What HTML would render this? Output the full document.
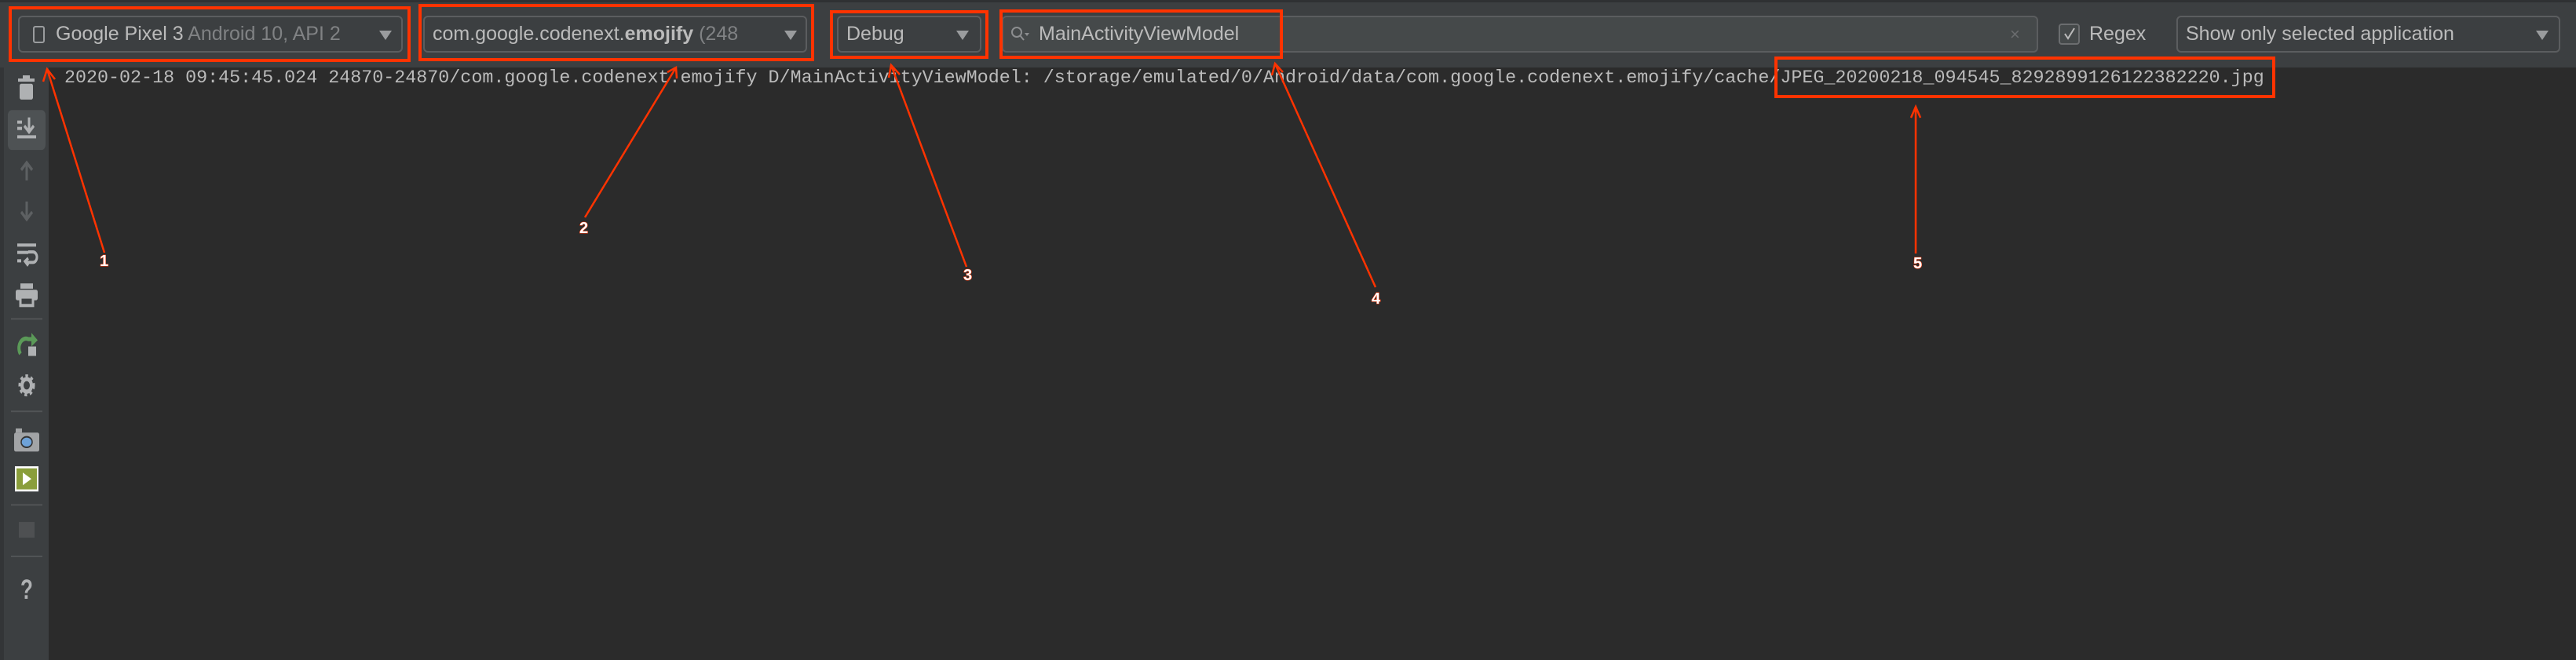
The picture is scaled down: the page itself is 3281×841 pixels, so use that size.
<!DOCTYPE html>
<html><head><meta charset="utf-8">
<style>
*{margin:0;padding:0;box-sizing:border-box}
body{width:3281px;height:841px;background:#2b2b2b;position:relative;overflow:hidden;font-family:"Liberation Sans",sans-serif;color:#bbbbbb}
.a{position:absolute}
.tb{left:0;top:0;width:3281px;height:86px;background:#3c3f41;border-top:3px solid #2f3133}
.combo{position:absolute;top:20px;height:47px;border:2px solid #5b5d5f;border-radius:6px;background:#3c3f41;overflow:hidden;white-space:nowrap;font-size:25px;line-height:43px}
.arr{position:absolute;top:17px;width:0;height:0;border-left:8px solid transparent;border-right:8px solid transparent;border-top:12px solid #9a9c9e}
.side{left:0;top:86px;width:62px;height:755px;background:#3c3f41;border-left:5px solid #333537}
.log{left:82px;top:87px;font-family:"Liberation Mono",monospace;font-size:23.35px;line-height:26px;color:#bbbbbb;white-space:pre}
.red{position:absolute;border:4px solid #ff3300}
.lbl{position:absolute;font-family:"Liberation Sans",sans-serif;font-weight:bold;font-size:20px;color:#fff;-webkit-text-stroke:1px #ff3300;paint-order:stroke}
</style></head><body>
<div class="a tb"></div>

<div class="combo" style="left:23px;width:490px">
  <div class="a" style="left:17px;top:11px;width:15px;height:22px;border:2px solid #9a9c9e;border-radius:3px"></div>
  <span class="a" style="left:46px;top:0">Google Pixel 3 <span style="color:#808284">Android 10, API 2</span></span>
  <div class="arr" style="left:458px"></div>
</div>
<div class="combo" style="left:539px;width:489px">
  <span class="a" style="left:10px;top:0">com.google.codenext.<b>emojify</b> <span style="color:#808284">(248</span></span>
  <div class="arr" style="left:458px"></div>
</div>
<div class="combo" style="left:1066px;width:184px">
  <span class="a" style="left:10px;top:0">Debug</span>
  <div class="arr" style="left:150px"></div>
</div>
<div class="combo" style="left:1276px;width:1320px;background:#45494a">
  <svg class="a" style="left:9px;top:11px" width="26" height="22" viewBox="0 0 26 22"><circle cx="8" cy="8" r="6" fill="none" stroke="#8c8e90" stroke-width="2"/><line x1="12" y1="12" x2="17" y2="18" stroke="#8c8e90" stroke-width="2"/><path d="M18 9 L24 9 L21 13Z" fill="#8c8e90"/></svg>
  <span class="a" style="left:45px;top:0">MainActivityViewModel</span>
  <span class="a" style="left:1282px;top:0;color:#6a6c6e;font-size:22px">×</span>
</div>
<div class="a" style="left:2622px;top:30px;width:27px;height:27px;border:2px solid #6b6d6f;border-radius:4px;background:#45494a"></div>
<svg class="a" style="left:2626px;top:33px" width="20" height="20"><path d="M4 10 L8 16 L16 3" fill="none" stroke="#bbbbbb" stroke-width="2"/></svg>
<span class="a" style="left:2661px;top:22px;font-size:25px;line-height:43px">Regex</span>
<div class="combo" style="left:2772px;width:489px">
  <span class="a" style="left:10px;top:0">Show only selected application</span>
  <div class="arr" style="left:456px"></div>
</div>

<div class="a side"></div>
<svg class="a" style="left:0;top:86px" width="62" height="755">
<g transform="translate(0,2) scale(1,1.339)">
  <rect x="23" y="9" width="21" height="3" fill="#afb1b3"/><rect x="25" y="14" width="17" height="15" rx="2" fill="#afb1b3"/><rect x="29" y="6" width="9" height="3" fill="#afb1b3"/>
  <rect x="10" y="39" width="48" height="38" rx="5" fill="#4e5254"/>
  <rect x="22" y="49" width="6" height="3" fill="#afb1b3"/><rect x="22" y="55" width="6" height="3" fill="#afb1b3"/><rect x="22" y="63" width="24" height="3" fill="#afb1b3"/>
  <path d="M37 46 V59 M31 54 L37 60 L43 54" stroke="#afb1b3" stroke-width="3" fill="none"/>
  <path d="M34 106 V89 M27 96 L34 89 L41 96" stroke="#5d6062" stroke-width="3" fill="none"/>
  <path d="M34 126 V143 M27 136 L34 143 L41 136" stroke="#5d6062" stroke-width="3" fill="none"/>
  <rect x="22" y="166" width="24" height="3" fill="#afb1b3"/><rect x="22" y="173" width="14" height="3" fill="#afb1b3"/><rect x="22" y="181" width="5" height="3" fill="#afb1b3"/>
  <path d="M36 174 H42 a5 5 0 0 1 0 10 H33 M36 180 L32 183 L36 187" stroke="#afb1b3" stroke-width="3" fill="none"/>
  <rect x="26" y="204" width="16" height="5" fill="#afb1b3"/><rect x="20" y="210" width="28" height="10" rx="2" fill="#afb1b3"/><rect x="26" y="217" width="16" height="8" fill="#3c3f41" stroke="#afb1b3" stroke-width="3"/>
  <rect x="14" y="237" width="40" height="1.5" fill="#515456"/>
  <path d="M26 271 A9 9 0 0 1 36 257 H42" stroke="#5b9a58" stroke-width="4" fill="none"/><path d="M40 251 L48 258 L40 264Z" fill="#5b9a58"/><rect x="36" y="264" width="10" height="9" fill="#afb1b3"/>
  <circle cx="34" cy="301" r="8" fill="none" stroke="#afb1b3" stroke-width="5" stroke-dasharray="3 3"/><circle cx="34" cy="301" r="6" fill="none" stroke="#afb1b3" stroke-width="4"/>
  <rect x="14" y="325" width="40" height="1.5" fill="#515456"/>
  <rect x="18" y="346" width="32" height="18" rx="2" fill="#a2a4a6"/><rect x="20" y="342" width="8" height="4" fill="#a2a4a6"/><ellipse cx="34" cy="355" rx="7" ry="5" fill="#6ea2d8" stroke="#333" stroke-width="1.5"/>
  <rect x="20" y="379" width="28" height="22" fill="#8a9e3b" stroke="#fff" stroke-width="2"/><path d="M29 384 L40 390 L29 396Z" fill="#fff"/>
  <rect x="14" y="414" width="40" height="1.5" fill="#515456"/>
  <rect x="24" y="431" width="20" height="15" fill="#4e5052"/>
  <rect x="14" y="463" width="40" height="1.5" fill="#515456"/>
  <text x="34" y="504" text-anchor="middle" font-family="Liberation Sans" font-weight="bold" font-size="26" fill="#afb1b3">?</text>
</g>
</svg>

<div class="a log">2020-02-18 09:45:45.024 24870-24870/com.google.codenext.emojify D/MainActivityViewModel: /storage/emulated/0/Android/data/com.google.codenext.emojify/cache/JPEG_20200218_094545_8292899126122382220.jpg</div>

<div class="red" style="left:11px;top:8px;width:512px;height:71px"></div>
<div class="red" style="left:533px;top:5px;width:504px;height:73px"></div>
<div class="red" style="left:1057px;top:13px;width:202px;height:62px"></div>
<div class="red" style="left:1273px;top:12px;width:361px;height:63px"></div>
<div class="red" style="left:2260px;top:72px;width:638px;height:53px"></div>

<svg class="a" style="left:0;top:0" width="3281" height="841">
<g stroke="#ff3300" stroke-width="2.5" fill="none">
<line x1="60" y1="88" x2="133" y2="322"/><path d="M55 104 L60 88 L70 101"/>
<line x1="861" y1="86" x2="745" y2="277"/><path d="M850 92 L861 86 L862 100"/>
<line x1="1135" y1="83" x2="1231" y2="340"/><path d="M1132 99 L1135 83 L1146 95"/>
<line x1="1624" y1="81" x2="1752" y2="366"/><path d="M1620 96 L1624 81 L1634 92"/>
<line x1="2440" y1="136" x2="2440" y2="323"/><path d="M2434 150 L2440 136 L2446 150"/>
</g>
</svg>
<span class="lbl" style="left:127px;top:322px">1</span>
<span class="lbl" style="left:738px;top:280px">2</span>
<span class="lbl" style="left:1227px;top:340px">3</span>
<span class="lbl" style="left:1747px;top:370px">4</span>
<span class="lbl" style="left:2437px;top:325px">5</span>
</body></html>
